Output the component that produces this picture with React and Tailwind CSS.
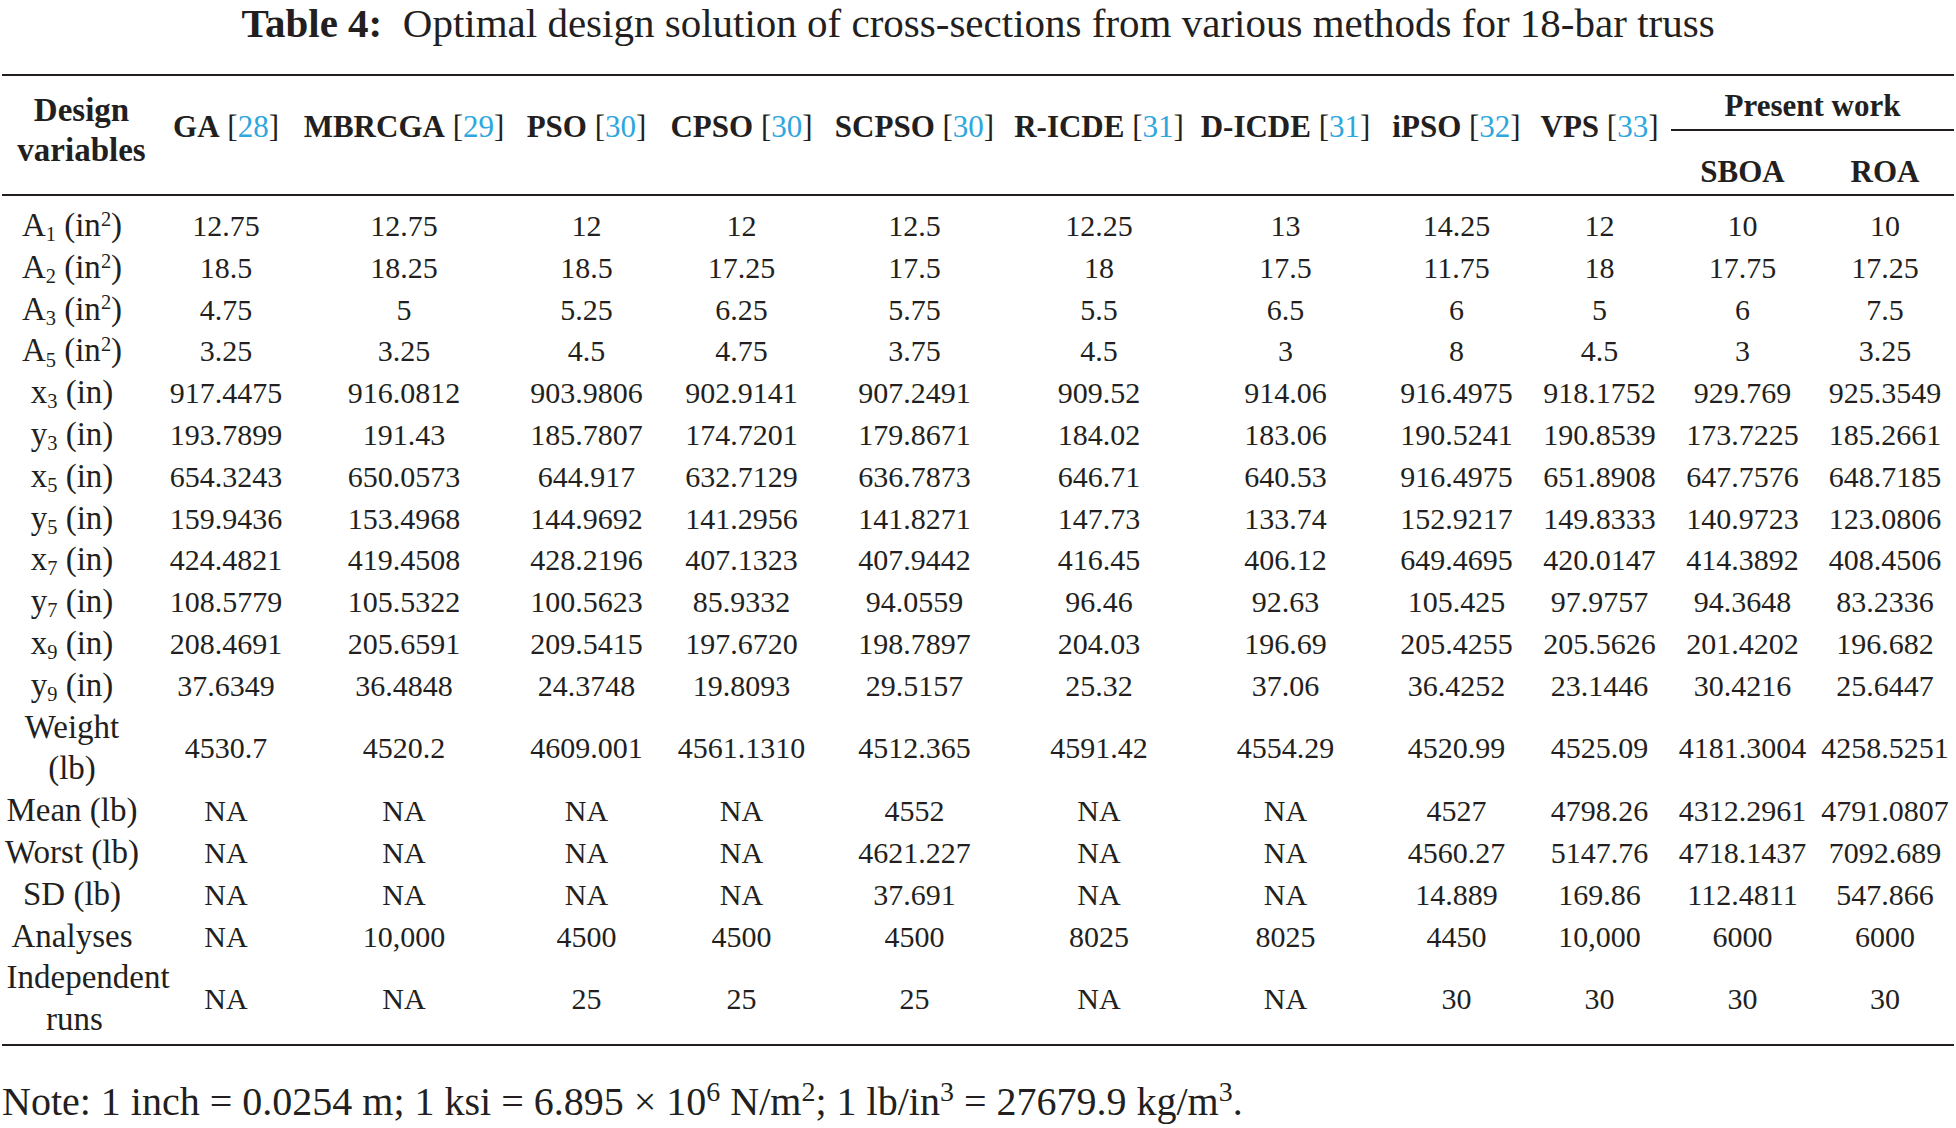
import React from "react";

const COLS = "grid grid-cols-[149px_166px_180px_169px_164px_178px_186px_179px_157px_143px_143px_142px]";
const SHIFT = ["pr-[5px]", "pr-[12px]", "pr-[2px]", "pl-[14px]", "pr-[9px]", "pr-[5px]", "", "pl-[8px]", "pl-[14px]", "", "", ""];

const Ref = ({ n }) => <span className="font-normal">[<span className="text-[#2ea6de]">{n}</span>]</span>;

const Lbl = ({ v, s, u, p }) => (
  <span>
    {v}
    {s && <sub className="text-[0.62em]">{s}</sub>} ({u}
    {p && <sup className="text-[0.62em]">{p}</sup>})
  </span>
);

const rows = [
  [<Lbl v="A" s="1" u="in" p="2" />, "12.75", "12.75", "12", "12", "12.5", "12.25", "13", "14.25", "12", "10", "10"],
  [<Lbl v="A" s="2" u="in" p="2" />, "18.5", "18.25", "18.5", "17.25", "17.5", "18", "17.5", "11.75", "18", "17.75", "17.25"],
  [<Lbl v="A" s="3" u="in" p="2" />, "4.75", "5", "5.25", "6.25", "5.75", "5.5", "6.5", "6", "5", "6", "7.5"],
  [<Lbl v="A" s="5" u="in" p="2" />, "3.25", "3.25", "4.5", "4.75", "3.75", "4.5", "3", "8", "4.5", "3", "3.25"],
  [<Lbl v="x" s="3" u="in" />, "917.4475", "916.0812", "903.9806", "902.9141", "907.2491", "909.52", "914.06", "916.4975", "918.1752", "929.769", "925.3549"],
  [<Lbl v="y" s="3" u="in" />, "193.7899", "191.43", "185.7807", "174.7201", "179.8671", "184.02", "183.06", "190.5241", "190.8539", "173.7225", "185.2661"],
  [<Lbl v="x" s="5" u="in" />, "654.3243", "650.0573", "644.917", "632.7129", "636.7873", "646.71", "640.53", "916.4975", "651.8908", "647.7576", "648.7185"],
  [<Lbl v="y" s="5" u="in" />, "159.9436", "153.4968", "144.9692", "141.2956", "141.8271", "147.73", "133.74", "152.9217", "149.8333", "140.9723", "123.0806"],
  [<Lbl v="x" s="7" u="in" />, "424.4821", "419.4508", "428.2196", "407.1323", "407.9442", "416.45", "406.12", "649.4695", "420.0147", "414.3892", "408.4506"],
  [<Lbl v="y" s="7" u="in" />, "108.5779", "105.5322", "100.5623", "85.9332", "94.0559", "96.46", "92.63", "105.425", "97.9757", "94.3648", "83.2336"],
  [<Lbl v="x" s="9" u="in" />, "208.4691", "205.6591", "209.5415", "197.6720", "198.7897", "204.03", "196.69", "205.4255", "205.5626", "201.4202", "196.682"],
  [<Lbl v="y" s="9" u="in" />, "37.6349", "36.4848", "24.3748", "19.8093", "29.5157", "25.32", "37.06", "36.4252", "23.1446", "30.4216", "25.6447"],
  [<span>Weight<br />(lb)</span>, "4530.7", "4520.2", "4609.001", "4561.1310", "4512.365", "4591.42", "4554.29", "4520.99", "4525.09", "4181.3004", "4258.5251"],
  ["Mean (lb)", "NA", "NA", "NA", "NA", "4552", "NA", "NA", "4527", "4798.26", "4312.2961", "4791.0807"],
  ["Worst (lb)", "NA", "NA", "NA", "NA", "4621.227", "NA", "NA", "4560.27", "5147.76", "4718.1437", "7092.689"],
  ["SD (lb)", "NA", "NA", "NA", "NA", "37.691", "NA", "NA", "14.889", "169.86", "112.4811", "547.866"],
  ["Analyses", "NA", "10,000", "4500", "4500", "4500", "8025", "8025", "4450", "10,000", "6000", "6000"],
  [
    <div className="w-[144px]">
      <div className="text-left pl-[4px] whitespace-nowrap">Independent</div>
      <div className="text-center">runs</div>
    </div>,
    "NA", "NA", "25", "25", "25", "NA", "NA", "30", "30", "30", "30",
  ],
];

const heads = [
  ["GA", "28"], ["MBRCGA", "29"], ["PSO", "30"], ["CPSO", "30"], ["SCPSO", "30"],
  ["R-ICDE", "31"], ["D-ICDE", "31"], ["iPSO", "32"], ["VPS", "33"],
];

export default function App() {
  return (
    <div className="w-[1956px] h-[1128px] bg-white text-[#231f20] font-['Liberation_Serif','Times_New_Roman',serif] overflow-hidden">
      <div className="pt-[4px] text-center text-[41px] leading-[38px]">
        <span className="font-bold">Table 4:</span>&nbsp; Optimal design solution of cross-sections from various methods for 18-bar truss
      </div>
      <div className="mt-[32px]">
        <div className="mx-[2px] h-[2px] bg-[#231f20]" />
        <div className={`${COLS} grid-rows-[55px_63px] font-bold text-[31px] leading-[40px]`}>
          <div className="row-span-2 flex items-center justify-center text-center pb-[10px] pl-[14px] text-[33px]">
            Design<br />variables
          </div>
          {heads.map(([h, r], i) => (
            <div key={h} className={`row-span-2 flex items-center justify-center whitespace-nowrap pb-[16px] ${SHIFT[i + 1]}`}>
              {h}&nbsp;<Ref n={r} />
            </div>
          ))}
          <div className="col-span-2 mr-[2px] border-b-2 border-[#231f20] flex items-center justify-center pt-[7px]">
            Present work
          </div>
          <div className="flex items-center justify-center pt-[19px]">SBOA</div>
          <div className="flex items-center justify-center pt-[19px]">ROA</div>
        </div>
        <div className="mx-[2px] h-[2px] bg-[#231f20]" />
        <div className={`${COLS} pt-[9px] pb-[3px] leading-[41.8px]`}>
          {rows.map((r, ri) =>
            r.map((c, ci) => (
              <div
                key={ri + "-" + ci}
                className={`flex items-center justify-center text-center whitespace-nowrap ${ci === 0 ? "text-[33px]" : "text-[30px]"} ${ci === 0 && ri === rows.length - 1 ? "" : SHIFT[ci]}`}
              >
                {c}
              </div>
            ))
          )}
        </div>
        <div className="mx-[2px] h-[2px] bg-[#231f20]" />
      </div>
      <div className="mt-[35px] pl-[2px] text-[40px] leading-[42px] whitespace-nowrap">
        Note: 1 inch = 0.0254 m; 1 ksi = 6.895 × 10<sup className="text-[0.7em]">6</sup> N/m<sup className="text-[0.7em]">2</sup>; 1 lb/in<sup className="text-[0.7em]">3</sup> = 27679.9 kg/m<sup className="text-[0.7em]">3</sup>.
      </div>
    </div>
  );
}
